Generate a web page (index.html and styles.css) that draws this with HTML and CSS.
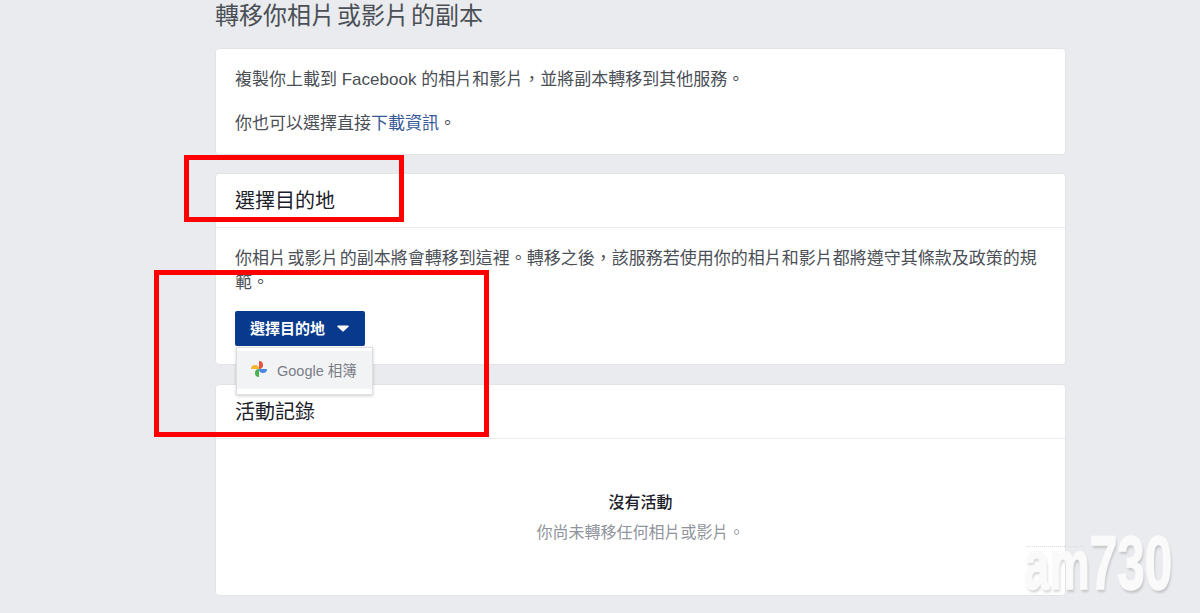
FILE: index.html
```html
<!DOCTYPE html>
<html lang="zh-Hant">
<head>
<meta charset="utf-8">
<title>轉移你相片或影片的副本</title>
<link rel="stylesheet" href="styles.css">
</head>
<body>
<main class="page">
  <h1 class="title">轉移你相片&#8202;或影片&#8202;的副本</h1>

  <section class="card intro">
    <p class="intro-line">複製你上載到 <span class="latin">Facebook</span> 的相片和影片，並將副本轉移到其他服務。</p>
    <p class="intro-line">你也可以選擇直接<a class="link" href="#">下載資訊</a>。</p>
  </section>

  <section class="card dest">
    <h2 class="card-head">選擇目的地</h2>
    <div class="card-body">
      <p class="desc">你相片&#8202;或影片&#8202;的副本將會轉移到這裡。轉移之後，該服務若使用你的相片和影片都將遵守其條款及政策的規範。</p>
      <div class="menu-wrap">
        <button class="btn" type="button">選擇目的地
          <svg class="caret" width="12" height="7" viewBox="0 0 12 7"><path d="M1 0.5h10a.8.8 0 0 1 .6 1.3L6.6 6.3a.8.8 0 0 1-1.2 0L.4 1.8A.8.8 0 0 1 1 .5z" fill="#fff"/></svg>
        </button>
        <div class="menu">
          <div class="menu-item">
            <svg class="gp" width="16" height="16" viewBox="0 0 24 24">
              <path d="M6 6a6 6 0 0 1 6 6H0a6 6 0 0 1 6-6z" fill="#f5b52e"/>
              <path d="M12 0a6 6 0 0 1 0 12z" fill="#e8503f"/>
              <path d="M12 12h12a6 6 0 0 1-12 0z" fill="#4a86e8"/>
              <path d="M12 12v12a6 6 0 0 1 0-12z" fill="#4caf50"/>
            </svg>
            <span class="menu-label"><span class="latin">Google</span> 相簿</span>
          </div>
        </div>
      </div>
    </div>
  </section>

  <section class="card activity">
    <h2 class="card-head">活動記錄</h2>
    <div class="empty">
      <p class="empty-title">沒有活動</p>
      <p class="empty-sub">你尚未轉移任何相片或影片。</p>
    </div>
  </section>
</main>

<div class="mark mark-a"></div>
<div class="mark mark-b"></div>

<div class="wm"><span class="wm-am">am</span><span class="wm-num">730</span></div>
<div class="wm-line"></div>
</body>
</html>
```

FILE: styles.css
```css
* { box-sizing: border-box; }
html, body { margin: 0; height: 613px; overflow: hidden; }
body {
  background: #e9ebee;
  font-family: "Liberation Sans", "Noto Sans CJK TC", sans-serif;
  color: #4b4f56;
  position: relative;
}
p, h1, h2 { margin: 0; }
.page { width: 851px; margin-left: 215px; display: flex; flex-direction: column; }
.title {
  font-size: 24px; font-weight: 400; line-height: 30px; color: #4b4f56;
  height: 48px; white-space: nowrap; padding-top: 1px;
}
.card {
  background: #fff;
  border: 1px solid #e2e4e8;
  border-radius: 4px;
}
.intro { height: 107px; padding: 19px 19px 0; margin-bottom: 18px; display: flex; flex-direction: column; gap: 20px; }
.intro-line { font-size: 17px; line-height: 24px; }
.latin { font-family: "Liberation Sans", sans-serif; }
.link { color: #365899; text-decoration: none; }
.dest { height: 192px; margin-bottom: 19px; }
.card-head {
  height: 54px; padding: 14px 19px 0; font-size: 20px; line-height: 26px; font-weight: 400;
  color: #1d2129; border-bottom: 1px solid #e9ebee;
}
.card-body { padding: 19px 19px 0; }
.desc { font-size: 17px; line-height: 24px; margin-bottom: 16px; }
.menu-wrap { position: relative; }
.btn {
  height: 35px; width: 130px; border: 0; border-radius: 2px; background: #073a8c; color: #fff;
  font: 700 15px/35px "Liberation Sans", "Noto Sans CJK TC", sans-serif;
  display: flex; align-items: center; padding: 0 0 0 15px; gap: 12px;
}
.menu {
  position: absolute; left: 1px; top: 36px; width: 137px; height: 48px; z-index: 2;
  background: #fff; border: 1px solid #dddfe2; box-shadow: 0 1px 3px rgba(0,0,0,.2);
  padding: 3px 0 5px;
}
.menu-item { height: 38px; background: #f2f3f5; display: flex; align-items: center; padding: 0 0 2px 14px; gap: 10px; }
.menu-label { font-size: 14.5px; color: #7a7d85; }
.activity { height: 212px; }
.empty { padding-top: 52px; text-align: center; }
.empty-title { font-size: 16px; line-height: 24px; font-weight: 500; color: #1d2129; margin-bottom: 6px; }
.empty-sub { font-size: 16px; line-height: 24px; color: #90949c; }
.mark { position: absolute; border: 5px solid #f00; pointer-events: none; z-index: 3; }
.mark-a { left: 184px; top: 155px; width: 220px; height: 67px; }
.mark-b { left: 154px; top: 270px; width: 335px; height: 167px; }
.wm {
  position: absolute; left: 1024px; top: 520px; z-index: 4; display: flex; align-items: baseline;
  font-weight: 700; color: #fafafa; transform: scaleX(.65); transform-origin: left top;
  text-shadow: 2px 3px 3px rgba(0,0,0,.16); white-space: nowrap; line-height: 86px;
  -webkit-text-stroke: 1.5px #fafafa;
}
.wm-am { font-size: 70px; }
.wm-num { font-size: 76px; }
.wm-line { position: absolute; left: 1027px; top: 546px; width: 58px; border-top: 1px dotted #dcdcdc; z-index: 4; }
```
